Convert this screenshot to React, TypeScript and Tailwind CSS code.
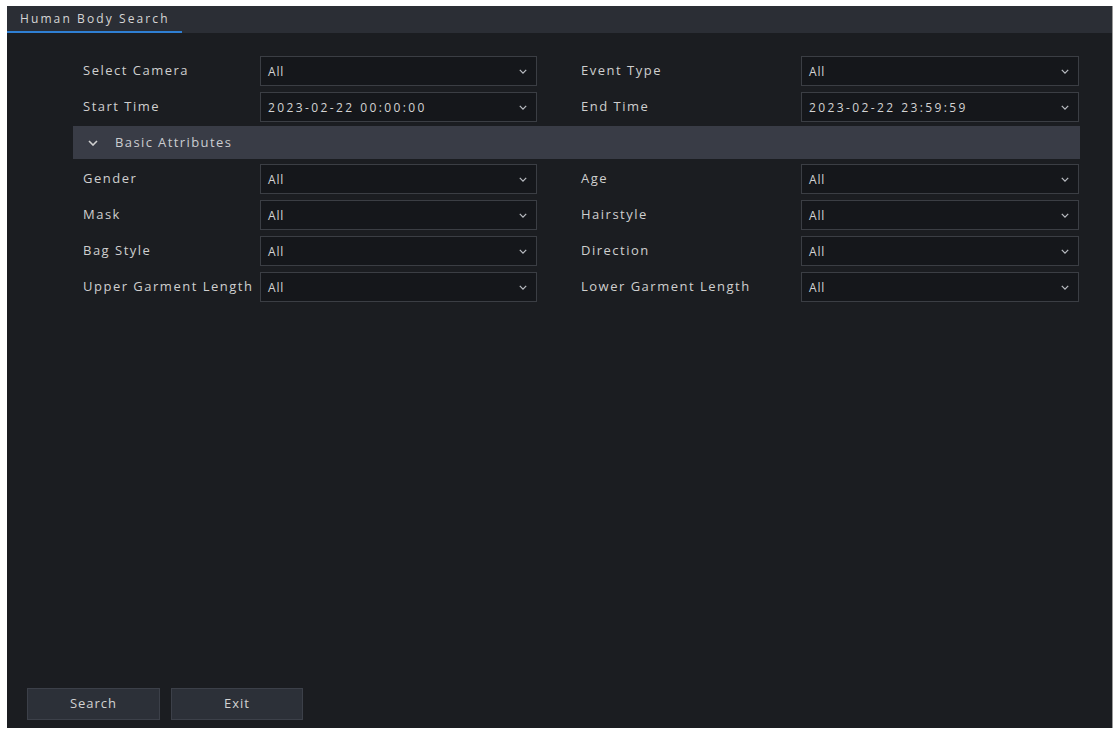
import * as React from "react"

type Field = { label: string; value: string }

const topRows: [Field, Field][] = [
  [
    { label: "Select Camera", value: "All" },
    { label: "Event Type", value: "All" },
  ],
  [
    { label: "Start Time", value: "2023-02-22 00:00:00" },
    { label: "End Time", value: "2023-02-22 23:59:59" },
  ],
]

const attrRows: [Field, Field][] = [
  [
    { label: "Gender", value: "All" },
    { label: "Age", value: "All" },
  ],
  [
    { label: "Mask", value: "All" },
    { label: "Hairstyle", value: "All" },
  ],
  [
    { label: "Bag Style", value: "All" },
    { label: "Direction", value: "All" },
  ],
  [
    { label: "Upper Garment Length", value: "All" },
    { label: "Lower Garment Length", value: "All" },
  ],
]

function Chevron({ className }: { className?: string }) {
  return (
    <svg viewBox="0 0 10 6" className={className} fill="none" stroke="currentColor" strokeWidth="1.6">
      <path d="M1 1l4 4 4-4" />
    </svg>
  )
}

function Select({ value, wide }: { value: string; wide?: boolean }) {
  // date values render wider than the short "All" option
  const spaced = value.length > 3
  return (
    <div
      className={`flex h-[30px] items-center justify-between border border-[#3b3e44] bg-[#15171b] pl-[7px] pr-[9px] ${
        wide ? "w-[278px]" : "w-[277px]"
      }`}
    >
      <span
        className={`pt-[2px] text-[12px] text-[#d3d3d3] ${spaced ? "tracking-[2.4px]" : "tracking-[0.8px]"}`}
      >
        {value}
      </span>
      <Chevron className="h-[5px] w-[8px] text-[#b9bcc2]" />
    </div>
  )
}

function Row({ left, right }: { left: Field; right: Field }) {
  return (
    <div className="flex h-[30px] items-center pl-[76px]">
      <div className="w-[177px] whitespace-nowrap text-[13px] tracking-[1.5px] text-[#cfcfcf]">{left.label}</div>
      <Select value={left.value} />
      <div className="ml-[44px] w-[220px] whitespace-nowrap text-[13px] tracking-[1.5px] text-[#cfcfcf]">
        {right.label}
      </div>
      <Select value={right.value} wide />
    </div>
  )
}

export default function App() {
  return (
    <div
      className="h-[731px] w-[1117px] bg-white pl-[7px] pr-[4px] pt-[6px] pb-[3px]"
      style={{ fontFamily: '"Open Sans", "Noto Sans", sans-serif' }}
    >
      <div className="flex h-full flex-col border-r border-[#9a9a9a] bg-[#1b1d21]">
        <div className="flex h-[27px] items-end bg-[#2b2e35]">
          <div className="flex h-full w-[175px] flex-col justify-between">
            <div className="pl-[13px] pt-[6px] text-[12px] leading-[14px] tracking-[2.1px] text-[#d6d6d6]">
              Human Body Search
            </div>
            <div className="h-[2px] bg-[#2f7fd3]" />
          </div>
        </div>

        <div className="mt-[23px] flex flex-col gap-[6px]">
          {topRows.map(([l, r]) => (
            <Row key={l.label} left={l} right={r} />
          ))}
        </div>

        <div className="ml-[66px] mt-[4px] flex h-[33px] w-[1007px] items-center bg-[#393c46] pl-[15px]">
          <Chevron className="h-[6px] w-[10px] text-[#d0d0d0]" />
          <span className="ml-[17px] text-[13px] tracking-[1.4px] text-[#cbcdd1]">Basic Attributes</span>
        </div>

        <div className="mt-[5px] flex flex-col gap-[6px]">
          {attrRows.map(([l, r]) => (
            <Row key={l.label} left={l} right={r} />
          ))}
        </div>

        <div className="flex-1" />

        <div className="flex gap-[11px] pb-[8px] pl-[20px]">
          <button className="h-[32px] w-[133px] border border-[#3c4049] bg-[#2c3038] text-[13px] tracking-[1px] text-[#d2d2d2]">
            Search
          </button>
          <button className="h-[32px] w-[132px] border border-[#3c4049] bg-[#2c3038] text-[13px] tracking-[1px] text-[#d2d2d2]">
            Exit
          </button>
        </div>
      </div>
    </div>
  )
}
